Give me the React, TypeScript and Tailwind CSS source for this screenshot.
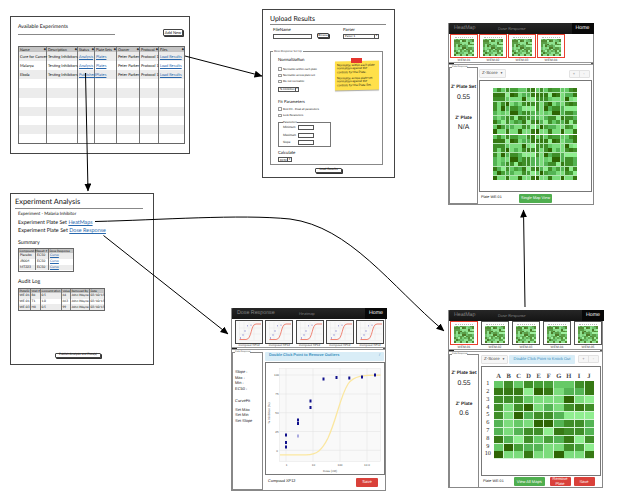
import React from "react";

const SHADES = [
  "bg-[#90ee90]",
  "bg-[#7cdc7c]",
  "bg-[#66c966]",
  "bg-[#54b454]",
  "bg-[#469f37]",
  "bg-[#3f8e28]",
  "bg-[#367914]",
  "bg-[#2e6504]",
];

const PLATE = [
  "2525442256",
  "6660761336",
  "5552111710",
  "5157131565",
  "5173553000",
  "3121773553",
  "3135506553",
  "6305243605",
  "2743311540",
  "7116117116",
];

const LETTERS = "ABCDEFGHIJ".split("");

function Plate({ className }: { className: string }) {
  return (
    <div className={`grid grid-cols-10 grid-rows-10 ${className}`}>
      {PLATE.join("")
        .split("")
        .map((c, i) => (
          <div key={i} className={SHADES[Number(c)]} />
        ))}
    </div>
  );
}

function MapThumb({ label, selected }: { label: string; selected?: boolean }) {
  return (
    <div className="flex w-[28px] shrink-0 flex-col items-center">
      <div
        className={`flex h-[24px] w-full flex-col items-center justify-center border bg-white ${
          selected ? "border-[#e8402f]" : "border-[#555]"
        }`}
      >
        <div className="mb-px h-px w-[18px] border-t border-dotted border-[#bbb]" />
        <Plate className="h-[17px] w-[20px] opacity-85" />
      </div>
      <span className="mt-[0.5px] text-[3.300px] leading-[3px] text-[#444] underline">{label}</span>
    </div>
  );
}

function CurveThumb() {
  return (
    <div className="flex w-[28px] shrink-0 flex-col items-center">
      <div className="h-[24px] w-full border border-[#444] bg-[#f8f8f8]">
        <svg viewBox="0 0 26 22" className="block h-full w-full">
          <path d="M3.5 1V19.5H25M8 1V19M13 1V19M18 1V19M3 7H25M3 13H25" stroke="#e6e6e6" strokeWidth=".4" fill="none" />
          <path d="M3.5 18.5H10C16 18.5 14.5 3 20 3H25" stroke="#ee7767" strokeWidth=".9" fill="none" />
          <path d="M4.5 16v2M7 13v2M9 9v2M11.500 4v1.500M15 3.500v1.500" stroke="#7777cc" strokeWidth=".6" />
        </svg>
      </div>
      <span className="mt-[0.5px] text-[3px] leading-[3px] whitespace-nowrap text-[#444] underline">Compoud XP12</span>
    </div>
  );
}

function ScrollBar() {
  return (
    <div className="flex h-[3px] shrink-0 items-center border-y border-[#999] bg-white">
      <div className="h-full w-[5px] bg-[#222]" />
      <div className="ml-auto h-full w-[2px] bg-[#555]" />
    </div>
  );
}

function NavBar({ title, other, wide }: { title: string; other: string; wide?: boolean }) {
  return (
    <div className="flex h-[10.500px] shrink-0 items-center rounded-t-[1px] bg-gradient-to-b from-[#262626] to-[#151515] leading-none whitespace-nowrap">
      <span className={`pt-[1.500px] pl-[5px] ${wide ? "w-[67px] text-[5.300px]" : "w-[49px] text-[5.300px]"} text-[#858585]`}>{title}</span>
      <span className="pt-[1.500px] text-[3.900px] text-[#7c7c7c]">{other}</span>
      <span className="ml-auto flex h-full w-[22px] items-center justify-center bg-[#080808] pt-px text-[5.200px] text-white">Home</span>
    </div>
  );
}

function SidePanel({ children, className }: { children: React.ReactNode; className: string }) {
  return (
    <div className={`flex shrink-0 flex-col border border-[#888] bg-white leading-none ${className}`}>
      <span className="-mt-[2px] ml-[2px] w-fit bg-white text-[2.200px] leading-[3px] whitespace-nowrap text-[#555]">Plate Response</span>
      {children}
    </div>
  );
}

function ZStats({ value, gap }: { value: string; gap: string }) {
  return (
    <div className="flex flex-col items-center pt-[13.500px] whitespace-nowrap text-[#222]">
      <span className="text-[4.700px] leading-[8px] font-bold">Z&apos; Plate Set</span>
      <span className="text-[6.800px] leading-[13px]">0.55</span>
      <span className={`text-[4.700px] leading-[8px] font-bold ${gap}`}>Z&apos; Plate</span>
      <span className="text-[6.800px] leading-[12px]">{value}</span>
    </div>
  );
}

function ZSelect() {
  return (
    <span className="flex h-[9px] w-[27px] shrink-0 items-center justify-between rounded-[1px] border border-[#e2e2e2] bg-[#f6f6f6] px-[2px] text-[4.400px] whitespace-nowrap text-[#444]">
      Z-Score <span className="text-[3px]">▼</span>
    </span>
  );
}

function PlusMinus() {
  return (
    <span className="ml-auto flex h-[8px] w-[21px] rounded-[1px] border border-[#e2e2e2] bg-[#f6f6f6] text-center text-[4px] leading-[6px] text-[#777]">
      <span className="flex-1 border-r border-[#e2e2e2]">+</span>
      <span className="flex-1">-</span>
    </span>
  );
}

function Sort() {
  return <span className="ml-auto text-[3px] text-[#222]">◆</span>;
}

function Button({ children, className }: { children: React.ReactNode; className: string }) {
  return (
    <div className={`flex items-center justify-center rounded-[1px] border border-[#444] bg-white whitespace-nowrap shadow-[1px_1px_0_#333] ${className}`}>
      {children}
    </div>
  );
}

const EXPERIMENTS = [
  ["Cure for Cancer", "Testing Inhibitors", "Analysis", "Plates", "Peter Parker", "Protocol 1", "Load Results"],
  ["Malarya", "Testing Inhibitors", "Analysis", "Plates", "Peter Parker", "Protocol 1", "Load Results"],
  ["Ebola", "Testing Inhibitors", "Published", "Plates", "Peter Parker", "Protocol 1", "Load Results"],
];

function ExperimentsWindow() {
  const rows = [...EXPERIMENTS, ...Array.from({ length: 7 }, () => Array(7).fill(""))];
  return (
    <section className="absolute top-[16px] left-[10px] flex h-[138px] w-[180px] flex-col border border-[#444] bg-white pr-[5px] pl-[7px]">
      <div className="flex h-[29px] items-start justify-between">
        <div className="w-[97px] border-b border-[#888] pt-[6px] pb-[3px]">
          <h1 className="text-[5.200px] leading-[8px]">Available Experiments</h1>
        </div>
        <Button className="mt-[12px] mr-px h-[7px] w-[20px] text-[4px]">Add New</Button>
      </div>
      <div className="flex h-[98px] w-[167px] flex-col border border-[#666] text-[3.950px] leading-none">
        <div className="grid h-[5px] shrink-0 grid-cols-[28px_31px_17px_22px_23px_19px_25px] bg-[#c4c4c4] text-[3.700px]">
          {["Name", "Description", "Status", "Plate Sets", "Owner", "Protocol", "Files"].map((h) => (
            <span key={h} className="flex items-center border-r border-[#777] pl-px whitespace-nowrap last:border-r-0">
              {h}
              <Sort />
            </span>
          ))}
        </div>
        <div className="grid flex-1 grid-rows-10">
          {rows.map((row, i) => (
            <div key={i} className="grid min-h-0 grid-cols-[28px_31px_17px_22px_23px_19px_25px] odd:bg-[#ececec]">
              {row.map((cell, j) => (
                <span
                  key={j}
                  className={`flex items-center border-r border-[#777] pl-px whitespace-nowrap last:border-r-0 ${
                    j === 2 || j === 3 || j === 6 ? "text-[#2868ae] underline" : "text-[#111]"
                  }`}
                >
                  {cell}
                </span>
              ))}
            </div>
          ))}
        </div>
      </div>
    </section>
  );
}

function Check({ children }: { children: React.ReactNode }) {
  return (
    <label className="flex h-[6.200px] items-center gap-[1.500px] text-[2.800px] whitespace-nowrap text-[#111]">
      <span className="size-[3.500px] rounded-[0.5px] border border-[#999]" />
      {children}
    </label>
  );
}

function Select({ children, className }: { children: React.ReactNode; className: string }) {
  return (
    <div className={`flex h-[5px] items-center justify-between border border-[#555] bg-white pl-px text-[2.800px] whitespace-nowrap ${className}`}>
      {children}
      <span className="flex h-full w-[4px] items-center justify-center border-l border-[#555] text-[2.500px]">▼</span>
    </div>
  );
}

function UploadWindow() {
  return (
    <section className="absolute top-[9px] left-[262px] flex h-[169px] w-[133px] flex-col border border-[#444] bg-white pr-[8px] pl-[7px] leading-none">
      <h1 className="h-[14.500px] border-b border-[#888] pt-[4.500px] text-[6.900px] leading-[8px]">Upload Results</h1>
      <div className="flex h-[26px] pt-[3px] pl-[3px] text-[4.300px]">
        <div className="w-[44px]">
          <p className="h-[6px]">FileName</p>
          <div className="h-[5px] w-[39px] border border-[#555]" />
        </div>
        <Button className="mt-[5.500px] h-[5px] w-[12px] text-[2.900px]">Browse</Button>
        <div className="ml-[14px]">
          <p className="h-[6px]">Parser</p>
          <Select className="w-[36px]">Parser 1</Select>
        </div>
      </div>
      <div className="flex h-[114px] w-[113px] border border-[#888]">
        <div className="w-[63px] pl-[7px]">
          <p className="-mt-[1.500px] -ml-[5px] w-fit bg-white px-px text-[2.800px] leading-[3px] whitespace-nowrap text-[#444]">Dose Response Set Up</p>
          <h2 className="mt-[4px] h-[9px] text-[4.300px] leading-[6px]">Normalization</h2>
          <Check>Normalize within each plate</Check>
          <Check>Normalize across plate set</Check>
          <Check>Do not normalize</Check>
          <Select className="mt-[2px] w-[21px]">% Inhibition</Select>
          <h2 className="mt-[7px] h-[7.500px] text-[4.200px] leading-[6px]">Fit Parameters</h2>
          <Check>Best Fit - Float all parameters</Check>
          <Check>Lock Parameters</Check>
          <div className="mt-[4px] flex h-[25px] w-[53px] flex-col border border-[#777] pl-[4px] text-[3px]">
            <span className="-mt-[2px] w-fit bg-white text-[2.800px] leading-[3px]">Parameters</span>
            {["Minimum", "Maximum", "Slope"].map((p) => (
              <div key={p} className="flex h-[7.100px] items-center">
                <span className="w-[15px]">{p}</span>
                <span className="h-[5px] w-[16px] border border-[#555]" />
              </div>
            ))}
          </div>
          <h2 className="mt-[3px] h-[7px] text-[4.300px] leading-[6px]">Calculate</h2>
          <Select className="w-[14px]">EC50</Select>
        </div>
        <div className="mt-[6px] flex h-[34px] w-[45px] flex-col items-center">
          <div className="z-10 h-[5px] w-[11px] bg-[#e5362e]" />
          <div className="-mt-[2px] h-[29px] w-[44px] -skew-y-1 bg-[#ffe04a] px-[2px] pt-[2.500px] text-[3.100px] leading-[3.700px] text-[#111] shadow-[0_1px_1px_#aaa]">
            <p>Normalize within each plate normalizes against the controls for the Plate.</p>
            <p className="mt-[2px]">Normalize across plate set normalizes against the controls for the Plate Set.</p>
          </div>
        </div>
      </div>
      <Button className="mt-[3px] ml-[45px] h-[5px] w-[27px] text-[3.300px]">Load Results</Button>
    </section>
  );
}

function AnalysisWindow() {
  return (
    <section className="absolute top-[193px] left-[10px] flex h-[172px] w-[144px] flex-col border border-[#444] bg-white pl-[7px] leading-none">
      <h1 className="-ml-[3px] h-[15px] w-[128px] border-b border-[#888] pt-[4px] text-[7.400px] leading-[8px] whitespace-nowrap">Experiment Analysis</h1>
      <p className="h-[9.500px] pt-[2.500px] pl-[0px] text-[4.450px]">Experiment - Malaria Inhibitor</p>
      <p className="h-[8.500px] pt-[2px] text-[5.350px]">
        Experiment Plate Set <a className="text-[#2868ae] underline">HeatMaps</a>
      </p>
      <p className="h-[13px] pt-[2px] text-[5.450px]">
        Experiment Plate Set <a className="text-[#2868ae] underline">Dose Response</a>
      </p>
      <h2 className="h-[8px] text-[5.300px] leading-[6px]">Summary</h2>
      <div className="flex h-[23.500px] w-[56px] flex-col border border-[#666] text-[3.400px]">
        <div className="grid h-[4px] grid-cols-[17px_13px_24px] bg-[#c4c4c4] text-[3px] whitespace-nowrap">
          {["Compound #", "Result #", "Dose Response"].map((h) => (
            <span key={h} className="flex items-center border-r border-[#777] pl-[0.5px] last:border-r-0">{h}</span>
          ))}
        </div>
        {["Placebo", "JR004", "MT223"].map((n) => (
          <div key={n} className="grid flex-1 grid-cols-[17px_13px_24px] even:bg-[#ececec]">
            <span className="flex items-center border-r border-[#777] pl-px">{n}</span>
            <span className="flex items-center border-r border-[#777] pl-px">EC50</span>
            <span className="flex items-center pl-px text-[#2868ae] underline">Curve</span>
          </div>
        ))}
      </div>
      <h2 className="mt-[7.500px] h-[9px] text-[5.300px] leading-[6px]">Audit Log</h2>
      <div className="flex h-[23px] w-[87px] flex-col border border-[#666] text-[3.200px]">
        <div className="grid h-[4px] grid-cols-[12px_10px_21px_9px_19px_14px] bg-[#c4c4c4] text-[3px] whitespace-nowrap">
          {["PlateID", "Well #", "Concentration", "Value", "Removed By", "Date"].map((h) => (
            <span key={h} className="flex items-center border-r border-[#777] pl-[0.5px] last:border-r-0">{h}</span>
          ))}
        </div>
        {[
          ["WE-01", "B4", "0.5", "64", "John Wayne", "03/10/15"],
          ["WE-01", "T1", "1.0", "663", "John Wayne", "03/10/15"],
          ["WE-03", "H8", "0.5", "99", "John Wayne", "03/10/15"],
        ].map((r, i) => (
          <div key={i} className="grid flex-1 grid-cols-[12px_10px_21px_9px_19px_14px] even:bg-[#ececec]">
            {r.map((c, j) => (
              <span key={j} className="flex items-center border-r border-[#777] pl-[0.5px] whitespace-nowrap last:border-r-0">{c}</span>
            ))}
          </div>
        ))}
      </div>
      <Button className="mt-[41.500px] ml-[37px] h-[5px] w-[46px] text-[3.100px]">Publish Analysis and Plate(s)</Button>
    </section>
  );
}

function AllMapsWindow() {
  return (
    <section className="absolute top-[23px] left-[448px] flex h-[182px] w-[145.500px] flex-col border border-[#888] bg-white font-['Liberation_Sans',sans-serif] leading-none">
      <div className="-mt-px -mr-px">
        <NavBar title="HeatMap" other="Dose Response" />
      </div>
      <div className="flex h-[28.500px] gap-[1px] pt-[0.5px] pl-[1px]">
        {["WEM-01", "WEM-02", "WEM-03", "WEM-04"].map((l) => (
          <MapThumb key={l} label={l} selected />
        ))}
      </div>
      <ScrollBar />
      <div className="flex flex-1 pt-[2px]">
        <SidePanel className="h-[137px] w-[29px]">
          <ZStats value="N/A" gap="mt-[10px]" />
        </SidePanel>
        <div className="flex flex-1 flex-col pl-[1px]">
          <div className="flex h-[13px] items-center pr-[3px]">
            <ZSelect />
            <PlusMinus />
          </div>
          <div className="flex h-[112px] w-[113px] items-start justify-center border border-[#777] pt-[7px] pr-px">
            <div className="grid grid-cols-2 gap-[1px]">
              {[0, 1, 2, 3].map((k) => (
                <Plate key={k} className="h-[45.500px] w-[41.500px] gap-[0.4px] bg-[#b0e6b0]" />
              ))}
            </div>
          </div>
          <div className="flex flex-1 items-center pl-[2px]">
            <span className="w-[38px] text-[3.700px] whitespace-nowrap">Plate WE-01</span>
            <span className="flex h-[9px] w-[33px] items-center justify-center rounded-[1px] bg-[#4fae4f] text-[3.900px] whitespace-nowrap text-white">Single Map View</span>
          </div>
        </div>
      </div>
    </section>
  );
}

const POINTS = [
  [286, 435], [286, 442.5], [286, 447], [298, 420], [298, 423.5], [310.5, 401], [310.5, 407.5],
  [323.5, 379], [336.5, 377.5], [349.3, 378], [362, 377], [375, 375],
];

function DoseChart() {
  return (
    <svg viewBox="266 363 118 111" className="block h-full w-full" fontFamily="Liberation Sans, sans-serif" fontSize="3" fill="#555">
      <rect x="279.500" y="368.500" width="101" height="93" fill="#f9f9f9" stroke="#e4e4e4" strokeWidth=".5" />
      <path d="M286 368.500V461.500M313 368.500V461.500M340 368.500V461.500M367 368.500V461.500M279.500 375H380.500M279.500 394H380.500M279.500 412.700H380.500M279.500 431.500H380.500M279.500 450.300H380.500" stroke="#e4e4e4" strokeWidth=".6" fill="none" />
      <path d="M280 454.800H306C317 454.800 322 450 328 438C337 418 340 397 348 384C354 375.500 363 375.200 380.500 375.200" fill="none" stroke="#fbe7a0" strokeWidth="1.300" />
      {POINTS.map(([x, y], i) => (
        <rect key={i} x={x - 1} y={y - 1.5} width="2" height="3" fill="#10108c" />
      ))}
      <rect x="297" y="434.500" width="2" height="3" fill="#aaaae0" />
      <g textAnchor="middle">
        <text x="286.500" y="465.500">1</text>
        <text x="313.500" y="465.500">10</text>
        <text x="340" y="465.500">100</text>
        <text x="367" y="465.500">10.0</text>
        <text x="330" y="471.500">Dose (nM)</text>
        <text x="276.500" y="376.200">100</text>
        <text x="277" y="395.200">75</text>
        <text x="277" y="414">50</text>
        <text x="277" y="432.500">25</text>
        <text x="277" y="451.500">0</text>
        <text transform="translate(269.800 413) rotate(-90)">% Inhibition (%)</text>
      </g>
    </svg>
  );
}

function DoseWindow() {
  return (
    <section className="absolute top-[308px] left-[231px] flex h-[183px] w-[155px] flex-col border border-[#888] bg-white font-['Liberation_Sans',sans-serif] leading-none">
      <div className="-mt-px -mr-[2px]">
        <NavBar title="Dose Response" other="Heatmap" wide />
      </div>
      <div className="flex h-[29.500px] justify-between pt-[1px] pr-[1px] pl-[3px]">
        {[0, 1, 2, 3, 4].map((k) => (
          <CurveThumb key={k} />
        ))}
      </div>
      <ScrollBar />
      <div className="flex flex-1 pt-[1.500px]">
        <SidePanel className="mt-[0.5px] h-[138px] w-[31px]">
          <div className="flex flex-col pt-[15px] pl-[2px] text-[4px] leading-[5.500px] text-[#222]">
            <span>Slope :</span>
            <span>Max :</span>
            <span>Min :</span>
            <span>EC50 :</span>
            <span className="mt-[7px]">CurveFit</span>
            <span className="mt-[3px]">Set Max</span>
            <span>Set Min</span>
            <span>Set Slope</span>
          </div>
        </SidePanel>
        <div className="flex flex-1 flex-col pl-[2px]">
          <div className="flex h-[9px] w-[119px] items-center justify-between rounded-[1px] bg-[#d9edf7] px-[4px] text-[3.850px] font-bold whitespace-nowrap text-[#3a8fbd]">
            Double Click Point to Remove Outliers <span className="font-normal">/</span>
          </div>
          <div className="mt-[1px] h-[113px] w-[120px] border border-[#777]">
            <DoseChart />
          </div>
          <div className="flex h-[15px] items-center justify-between pr-[7px] pl-[3px]">
            <span className="pb-[3px] text-[3.900px]">Compoud XP12</span>
            <span className="flex h-[9px] w-[22px] items-center justify-center rounded-[1px] bg-[#d9413a] text-[4.200px] text-white">Save</span>
          </div>
        </div>
      </div>
    </section>
  );
}

function SingleMapWindow() {
  return (
    <section className="absolute top-[310px] left-[448px] flex h-[178px] w-[155px] flex-col border border-[#888] bg-white font-['Liberation_Sans',sans-serif] leading-none">
      <div className="-mt-px -mr-[2px]">
        <NavBar title="HeatMap" other="Dose Response" />
      </div>
      <div className="flex h-[28.500px] justify-between pt-[0.5px] pl-[1px]">
        {["WEM-01", "WEM-02", "WEM-03", "WEM-04", "WEM-05"].map((l, i) => (
          <MapThumb key={l} label={l} selected={i === 0} />
        ))}
      </div>
      <ScrollBar />
      <div className="flex flex-1 pt-[2px]">
        <SidePanel className="h-[134px] w-[30px]">
          <ZStats value="0.6" gap="mt-[10px]" />
        </SidePanel>
        <div className="flex flex-1 flex-col pl-[2px]">
          <div className="flex h-[12px] items-center gap-[1px] pr-[3px] pb-[1px]">
            <ZSelect />
            <span className="flex h-[9px] w-[66px] shrink-0 items-center justify-center rounded-[1px] bg-[#d9edf7] text-[4px] whitespace-nowrap text-[#3a8fbd]">Double Click Point to Knock Out</span>
            <PlusMinus />
          </div>
          <div className="flex h-[110px] w-[120px] border border-[#777] pt-[7px] font-['Liberation_Serif',serif] font-bold text-[#444]">
            <div className="mt-[7px] flex h-[78px] w-[11.500px] flex-col text-[6.200px]">
              {LETTERS.map((_, i) => (
                <span key={i} className="flex flex-1 items-center justify-center font-normal text-[#222]">{i + 1}</span>
              ))}
            </div>
            <div>
              <div className="grid h-[7px] w-[100.500px] grid-cols-10 text-center text-[6.500px] leading-[6px]">
                {LETTERS.map((l) => (
                  <span key={l}>{l}</span>
                ))}
              </div>
              <Plate className="h-[78px] w-[100.500px] gap-[0.8px] bg-[#d5f5d5]" />
            </div>
          </div>
          <div className="flex flex-1 items-center pl-[2px] text-[4px] text-white">
            <span className="w-[31px] text-[3.700px] whitespace-nowrap text-[#222]">Plate WE-01</span>
            <span className="flex h-[9px] w-[30.500px] items-center justify-center rounded-[1px] bg-[#4fae4f] whitespace-nowrap">View All Maps</span>
            <span className="ml-[5px] flex h-[9px] w-[21px] items-center justify-center rounded-[1px] bg-[#d9413a] text-center leading-[4.300px]">Remove Plate</span>
            <span className="ml-[3px] flex h-[9px] w-[21px] items-center justify-center rounded-[1px] bg-[#d9413a]">Save</span>
          </div>
        </div>
      </div>
    </section>
  );
}

function Connectors() {
  return (
    <svg className="absolute top-0 left-0 h-[503px] w-[617px]" viewBox="0 0 617 503" fill="none" stroke="#000" strokeWidth="1">
      <defs>
        <marker id="head" viewBox="0 0 8 7" refX="7.500" refY="3.500" markerWidth="8" markerHeight="7" markerUnits="userSpaceOnUse" orient="auto">
          <path d="M0 0L8 3.500L0 7Z" fill="#000" stroke="none" />
        </marker>
      </defs>
      <path d="M185 56L262 76" markerEnd="url(#head)" />
      <path d="M85.500 73L88 191" markerEnd="url(#head)" />
      <path d="M95 221.500C160 220 240 214 290 219C350 227 390 285 444 331" markerEnd="url(#head)" />
      <path d="M103.500 235.500L228 334" markerEnd="url(#head)" />
      <path d="M525 307L523.500 210" markerEnd="url(#head)" />
    </svg>
  );
}

export default function App() {
  return (
    <main className="relative h-[503px] w-[617px] overflow-hidden bg-white font-['Lato',sans-serif] text-[#111] [text-rendering:geometricPrecision]">
      <ExperimentsWindow />
      <UploadWindow />
      <AllMapsWindow />
      <AnalysisWindow />
      <DoseWindow />
      <SingleMapWindow />
      <Connectors />
    </main>
  );
}
